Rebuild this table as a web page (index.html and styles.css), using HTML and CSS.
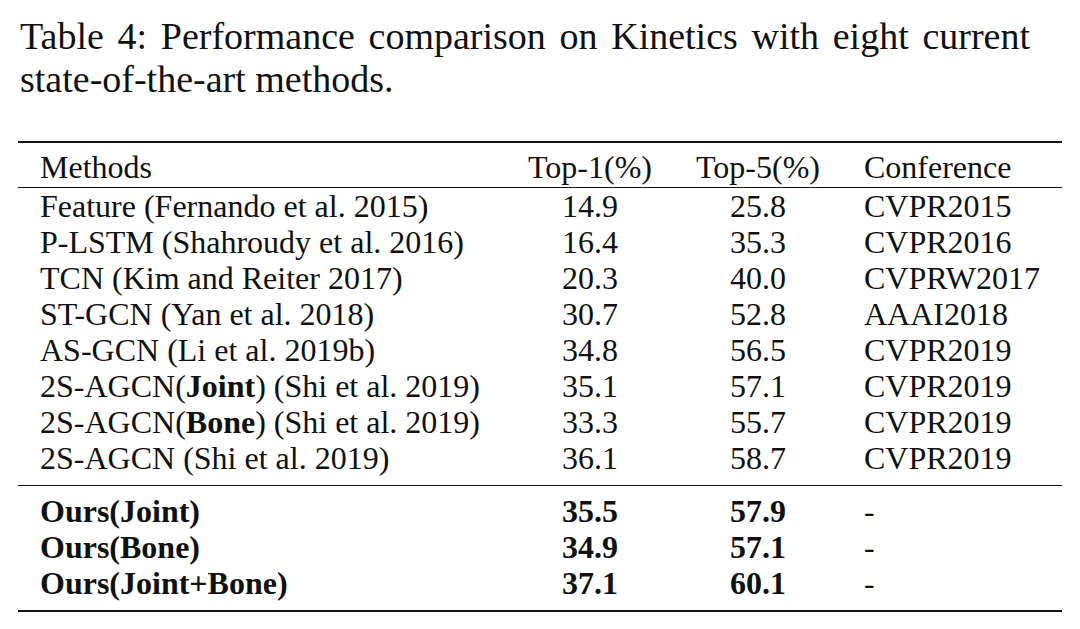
FILE: index.html
```html
<!DOCTYPE html>
<html lang="en">
<head>
<meta charset="utf-8">
<title>Table 4</title>
<link rel="stylesheet" href="styles.css">
</head>
<body>
<p class="caption">Table 4: Performance comparison on Kinetics with eight current state-of-the-art methods.</p>
<table class="results">
  <colgroup>
    <col class="c-method">
    <col class="c-num">
    <col class="c-num">
    <col class="c-conf">
  </colgroup>
  <thead>
    <tr><th class="method">Methods</th><th class="num">Top-1(%)</th><th class="num">Top-5(%)</th><th class="conf">Conference</th></tr>
  </thead>
  <tbody class="prior">
    <tr><td class="method">Feature (Fernando et al. 2015)</td><td class="num">14.9</td><td class="num">25.8</td><td class="conf">CVPR2015</td></tr>
    <tr><td class="method">P-LSTM (Shahroudy et al. 2016)</td><td class="num">16.4</td><td class="num">35.3</td><td class="conf">CVPR2016</td></tr>
    <tr><td class="method">TCN (Kim and Reiter 2017)</td><td class="num">20.3</td><td class="num">40.0</td><td class="conf">CVPRW2017</td></tr>
    <tr><td class="method">ST-GCN (Yan et al. 2018)</td><td class="num">30.7</td><td class="num">52.8</td><td class="conf">AAAI2018</td></tr>
    <tr><td class="method">AS-GCN (Li et al. 2019b)</td><td class="num">34.8</td><td class="num">56.5</td><td class="conf">CVPR2019</td></tr>
    <tr><td class="method">2S-AGCN(<b>Joint</b>) (Shi et al. 2019)</td><td class="num">35.1</td><td class="num">57.1</td><td class="conf">CVPR2019</td></tr>
    <tr><td class="method">2S-AGCN(<b>Bone</b>) (Shi et al. 2019)</td><td class="num">33.3</td><td class="num">55.7</td><td class="conf">CVPR2019</td></tr>
    <tr><td class="method">2S-AGCN (Shi et al. 2019)</td><td class="num">36.1</td><td class="num">58.7</td><td class="conf">CVPR2019</td></tr>
  </tbody>
  <tbody class="ours">
    <tr><td class="method strong">Ours(Joint)</td><td class="num strong">35.5</td><td class="num strong">57.9</td><td class="conf">-</td></tr>
    <tr><td class="method strong">Ours(Bone)</td><td class="num strong">34.9</td><td class="num strong">57.1</td><td class="conf">-</td></tr>
    <tr><td class="method strong">Ours(Joint+Bone)</td><td class="num strong">37.1</td><td class="num strong">60.1</td><td class="conf">-</td></tr>
  </tbody>
</table>
</body>
</html>
```

FILE: styles.css
```css
html, body {
  margin: 0;
  padding: 0;
  background: #ffffff;
}

body {
  color: #111111;
  font-family: "Liberation Serif", "Times New Roman", serif;
}

.caption {
  margin: 15px 0 0 20px;
  width: 1010px;
  font-size: 38px;
  line-height: 43px;
  text-align: justify;
}

.results {
  margin: 40px 0 0 18px;
  width: 1044px;
  table-layout: fixed;
  border-collapse: separate;
  border-spacing: 0;
  border-top: 2px solid #151515;
  border-bottom: 2px solid #151515;
  font-size: 32px;
  line-height: 36px;
}

.c-method { width: 488px; }
.c-num { width: 168px; }
.c-conf { width: 220px; }

.results th,
.results td {
  padding: 0;
  font-weight: normal;
  white-space: nowrap;
  vertical-align: baseline;
}

.results th {
  padding-top: 6px;
  padding-bottom: 2px;
  border-bottom: 1px solid #151515;
}

.results .method { text-align: left; padding-left: 22px; }
.results .num { text-align: center; }
.results .conf { text-align: left; padding-left: 22px; }

.prior tr:last-child td { padding-bottom: 9px; }

.ours tr:first-child td {
  border-top: 1px solid #151515;
  padding-top: 7px;
}

.ours tr:last-child td { padding-bottom: 9px; }

.results .strong,
.results b { font-weight: bold; }
```
